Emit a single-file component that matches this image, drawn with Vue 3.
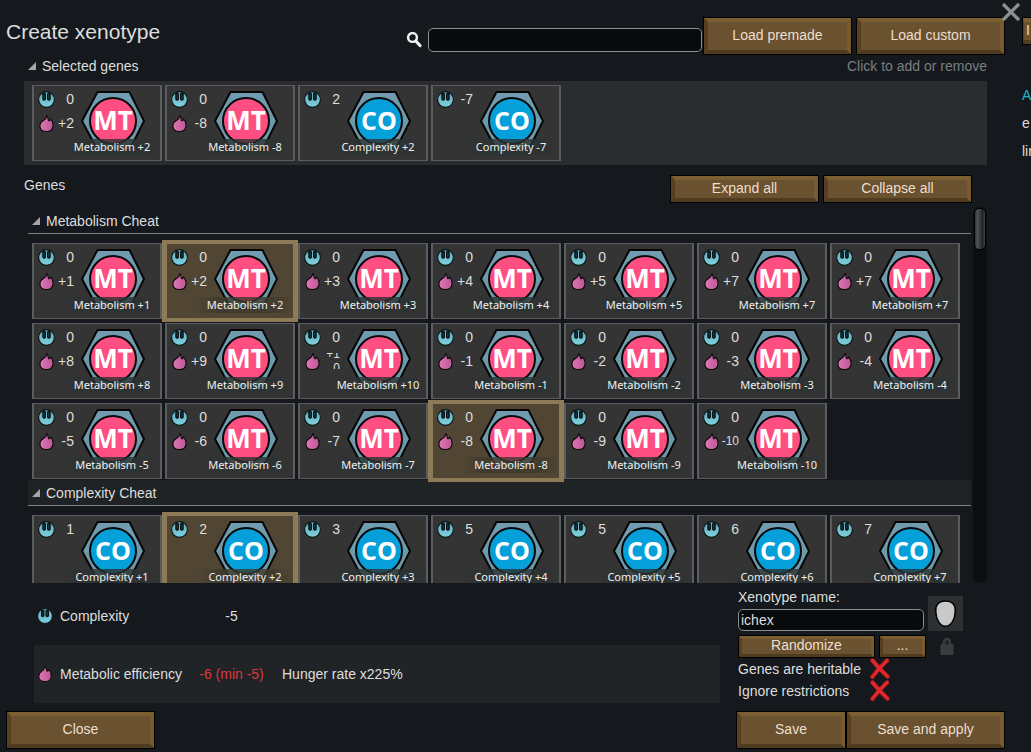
<template>
  <div class="window">
    <main class="dialog">
      <header class="top">
        <h1>Create xenotype</h1>
        <label class="search-icon" for="search" aria-label="Search genes">
          <svg width="16" height="16" viewBox="0 0 16 16">
            <circle cx="6.500" cy="5.500" r="4.4" fill="none" stroke="#f2f2f2" stroke-width="2.4" />
            <path d="M9.800 9L14 13.500" stroke="#f2f2f2" stroke-width="3.2" stroke-linecap="round" />
          </svg>
        </label>
        <input id="search" v-model="search" class="field search" type="text" />
        <div class="top-buttons">
          <button type="button" class="btn wide tall">Load premade</button>
          <button type="button" class="btn wide tall">Load custom</button>
        </div>
      </header>

      <section class="selected">
        <div class="selected-head">
          <i class="triangle"></i>
          <h2>Selected genes</h2>
          <span class="hint">Click to add or remove</span>
        </div>
        <div class="selected-panel">
          <div v-for="gene in selectedGenes" :key="gene.label" class="gene">
            <div class="costs">
              <div class="cost">
                <svg class="icon" viewBox="0 0 16 16"><use href="#icon-complexity" /></svg>
                <span>{{ gene.cpx }}</span>
              </div>
              <div v-if="gene.met" class="cost">
                <svg class="icon" viewBox="0 0 16 16"><use href="#icon-metabolism" /></svg>
                <span>{{ gene.met }}</span>
              </div>
            </div>
            <svg class="hex" viewBox="0 0 64 60">
              <use href="#hexagon" />
              <circle cx="32" cy="30" r="23" :fill="colors[gene.kind]" stroke="#080808" stroke-width="2" />
              <text x="32" y="39" text-anchor="middle" :class="gene.kind">{{ gene.kind }}</text>
            </svg>
            <span class="gene-label">{{ gene.label }}</span>
          </div>
        </div>
      </section>

      <div class="genes-head">
        <h2>Genes</h2>
        <button type="button" class="btn wide">Expand all</button>
        <button type="button" class="btn wide">Collapse all</button>
      </div>

      <div class="browser">
        <div class="list">
          <section v-for="group in groups" :key="group.title" class="group">
            <h3><i class="triangle"></i>{{ group.title }}</h3>
            <div class="grid">
              <button
                v-for="(gene, index) in group.genes"
                :key="index"
                type="button"
                class="gene"
                :class="{ active: gene.active }"
              >
                <span class="costs">
                  <span class="cost">
                    <svg class="icon" viewBox="0 0 16 16"><use href="#icon-complexity" /></svg>
                    <span>{{ gene.cpx }}</span>
                  </span>
                  <span v-if="gene.met" class="cost">
                    <svg class="icon" viewBox="0 0 16 16"><use href="#icon-metabolism" /></svg>
                    <span :class="{ small: gene.met === '-10', wrapped: gene.met === '+10' }"><b>{{ gene.met }}</b></span>
                  </span>
                </span>
                <svg class="hex" viewBox="0 0 64 60">
                  <use href="#hexagon" />
                  <circle cx="32" cy="30" r="23" :fill="colors[gene.kind]" stroke="#080808" stroke-width="2" />
                  <text x="32" y="39" text-anchor="middle" :class="gene.kind">{{ gene.kind }}</text>
                </svg>
                <span class="gene-label">{{ gene.label }}</span>
              </button>
            </div>
          </section>
        </div>
        <div class="scrollbar"><div class="thumb"></div></div>
      </div>

      <div class="bottom">
        <div class="stats">
          <div class="stat">
            <svg class="icon" viewBox="0 0 16 16"><use href="#icon-complexity" /></svg>
            <span>Complexity</span>
            <span class="value">-5</span>
          </div>
          <div class="stat shaded">
            <svg class="icon" viewBox="0 0 16 16"><use href="#icon-metabolism" /></svg>
            <span>Metabolic efficiency</span>
            <span class="value bad">-6 (min -5)</span>
            <span class="note">Hunger rate x225%</span>
          </div>
        </div>

        <form class="options" @submit.prevent>
          <div class="name-row">
            <div class="name">
              <label for="name">Xenotype name:</label>
              <input id="name" v-model="name" class="field" type="text" />
            </div>
            <button type="button" class="face" aria-label="Choose icon">
              <svg width="35" height="35" viewBox="0 0 35 35">
                <path d="M17.500 5C24 5 27.500 8.500 27.300 15C27.100 23 23.500 30.300 17.500 30.300C11.500 30.300 7.900 23 7.700 15C7.500 8.500 11 5 17.500 5Z" fill="#c9c9c9" stroke="#060606" stroke-width="1.6" />
              </svg>
            </button>
          </div>
          <div class="random-row">
            <button type="button" class="btn short randomize">Randomize</button>
            <button type="button" class="btn short more">...</button>
            <button type="button" class="lock" aria-label="Lock name">
              <svg width="14" height="20" viewBox="0 0 14 20">
                <path d="M0.500 18V8L3 6V4.500Q3.500 0.800 7 0.800Q10.500 0.800 11 4.500V6L13.500 8V18Z" fill="#393c3e" />
                <path d="M5.300 5.500Q5.300 3.600 7 3.600Q8.700 3.600 8.700 5.500L9 6.500L7 8L5 6.500Z" fill="#1d2022" />
              </svg>
            </button>
          </div>
          <label v-for="option in options" :key="option.text" class="check">
            <span>{{ option.text }}</span>
            <input v-model="option.on" type="checkbox" />
            <svg width="22" height="22" viewBox="0 0 22 22">
              <path d="M3.500 2.500Q10 10.500 18.500 18.500M18 2.500Q9.500 10.500 3.500 18.800" fill="none" stroke="#5d1416" stroke-width="5" stroke-linecap="round" />
              <path d="M3.500 2.500Q10 10.500 18.500 18.500M18 2.500Q9.500 10.500 3.500 18.800" fill="none" stroke="#e0272b" stroke-width="3.600" stroke-linecap="round" />
            </svg>
          </label>
        </form>
      </div>

      <footer>
        <button type="button" class="btn wide tall">Close</button>
        <div class="save-buttons">
          <button type="button" class="btn tall save">Save</button>
          <button type="button" class="btn tall apply">Save and apply</button>
        </div>
      </footer>
    </main>

    <aside class="side">
      <button type="button" class="btn">I</button>
      <a href="#">A</a>
      <p>e</p>
      <p>lin</p>
    </aside>

    <button type="button" class="close" aria-label="Close window">
      <svg width="20" height="20" viewBox="0 0 20 20">
        <path d="M2 2L18 18M18 2L2 18" stroke="#8d9093" stroke-width="3.200" />
      </svg>
    </button>

    <!-- shared icon shapes -->
    <svg class="defs" width="0" height="0" aria-hidden="true">
      <defs>
        <linearGradient id="teal" x1="0" y1="0" x2="0" y2="1">
          <stop offset="0" stop-color="#5fa9bb" />
          <stop offset="1" stop-color="#80d2e0" />
        </linearGradient>
        <linearGradient id="pink" x1="0" y1="0" x2="1" y2="0">
          <stop offset="0" stop-color="#e077b4" />
          <stop offset="1" stop-color="#bd5796" />
        </linearGradient>
        <linearGradient id="steel" x1="0" y1="0" x2="0" y2="1">
          <stop offset="0" stop-color="#719bb1" />
          <stop offset="1" stop-color="#6a97a5" />
        </linearGradient>
        <symbol id="icon-complexity" viewBox="0 0 16 16">
          <circle cx="8" cy="8" r="7.400" fill="url(#teal)" stroke="#0b1316" stroke-width="1" />
          <rect x="4" y="1.400" width="3.500" height="7.800" rx="1.700" fill="#071013" />
          <rect x="8.500" y="1.400" width="3.500" height="7.800" rx="1.700" fill="#071013" />
          <path d="M5.800 3V7.500M10.200 3V7.500" stroke="#2b4f59" stroke-width="0.800" />
        </symbol>
        <symbol id="icon-metabolism" viewBox="0 0 16 16">
          <path d="M8.400 0.400Q9.600 2.600 9.800 5.200Q11.300 5.800 12 3.800Q14.400 6.600 14.200 10.200Q13.600 15.600 8 15.600Q1.800 15.500 1.800 10Q2.200 6.600 5.400 5Q8 3.400 8.400 0.400Z" fill="url(#pink)" stroke="#0c0a0c" stroke-width="1" />
        </symbol>
        <symbol id="hexagon" viewBox="0 0 64 60">
          <path d="M16.500 1H48.500L63 30L48.500 59H16.500L1 30Z" fill="url(#steel)" stroke="#060606" stroke-width="2" />
        </symbol>
      </defs>
    </svg>
  </div>
</template>

<script setup>
import { ref } from 'vue';

const search = ref('');
const name = ref('ichex');

const colors = {
  MT: '#ff4f82',
  CO: '#059fd9'
};

const options = ref([
  { text: 'Genes are heritable', on: false },
  { text: 'Ignore restrictions', on: false }
]);

const selectedGenes = [
  { kind: 'MT', cpx: '0', met: '+2', label: 'Metabolism +2' },
  { kind: 'MT', cpx: '0', met: '-8', label: 'Metabolism -8' },
  { kind: 'CO', cpx: '2', label: 'Complexity +2' },
  { kind: 'CO', cpx: '-7', label: 'Complexity -7' }
];

const metabolism = [
  '+1', '+2', '+3', '+4', '+5', '+7', '+7', '+8', '+9', '+10',
  '-1', '-2', '-3', '-4', '-5', '-6', '-7', '-8', '-9', '-10'
];
const complexity = ['1', '2', '3', '5', '5', '6', '7'];

const groups = [
  {
    title: 'Metabolism Cheat',
    genes: metabolism.map((met) => ({
      kind: 'MT',
      cpx: '0',
      met,
      label: `Metabolism ${met}`,
      active: met === '+2' || met === '-8'
    }))
  },
  {
    title: 'Complexity Cheat',
    genes: complexity.map((cpx, index) => ({
      kind: 'CO',
      cpx,
      label: `Complexity +${index + 1}`,
      active: index === 1
    }))
  }
];
</script>

<style>
body {
  background-color: #15191d;
  overflow: hidden;
}
</style>

<style scoped>
.window {
  position: relative;
  display: flex;
  gap: 17px;
  height: 100vh;
  color: #dedede;
  background-color: #15191d;
  font-family: "Liberation Sans", Arial, sans-serif;
  font-size: 14px;
}

.dialog {
  flex: 1;
  min-width: 0;
  display: flex;
  flex-direction: column;
}

h1, h2, h3, p {
  margin: 0;
  font-weight: normal;
}

h2, h3 {
  font-size: 14px;
}

button, input {
  font: inherit;
  color: inherit;
  box-sizing: border-box;
}

button {
  padding: 0;
  border: 0;
  background: none;
}

svg {
  display: block;
}

.defs {
  position: absolute;
}

/* wooden buttons */
.btn {
  height: 26px;
  margin: 1px;
  padding-bottom: 2px;
  border: 4px solid;
  border-color: #7b5f30 #785c30 #4f3b1d #573f20;
  background-color: #6a512f;
  color: #ecdfce;
  line-height: 16px;
  box-shadow: 0 0 0 1px #000;
}

.btn.wide {
  width: 147px;
}

.btn.tall {
  height: 36px;
}

.btn.short {
  height: 21px;
  border-width: 3px;
  line-height: 13px;
}

.field {
  border: 1px solid #8b8f91;
  border-radius: 5px;
  background-color: #080a0b;
  padding: 0 2px;
  outline: 0;
}

.triangle {
  width: 8px;
  height: 8px;
  background-color: #a4a6a7;
  clip-path: polygon(100% 0, 100% 100%, 0 100%);
}

/* header */
.top {
  display: flex;
  align-items: flex-end;
  padding: 17px 0 0 6px;
}

h1 {
  flex: 1;
  align-self: flex-start;
  font-size: 21px;
  line-height: 30px;
}

.search-icon {
  margin: 0 6px 7px 0;
}

.search {
  width: 274px;
  height: 24px;
  margin: 0 1px 3px 0;
}

.top-buttons {
  display: flex;
  gap: 4px;
}

/* selected genes */
.selected {
  padding: 0 18px 0 24px;
}

.selected-head {
  display: flex;
  align-items: center;
  gap: 6px;
  padding: 0 0 4px 4px;
  line-height: 22px;
}

.hint {
  margin-left: auto;
  color: #7b7e80;
}

.selected-panel {
  display: flex;
  gap: 3px;
  padding: 4px 8px;
  background-color: #2a2c2d;
}

/* gene card */
.gene {
  position: relative;
  display: flex;
  align-items: flex-start;
  width: 130px;
  height: 76px;
  box-sizing: border-box;
  border: solid #5b5c5d;
  border-width: 1px 2px;
  background-color: #343434;
  text-align: left;
}

.gene.active {
  border-color: #8d7b57;
  background-color: #514533;
  box-shadow: 0 0 0 3px #8d7b57;
}

.costs {
  width: 40px;
  padding-top: 1px;
}

.cost {
  display: flex;
  align-items: center;
  justify-content: space-between;
  height: 24px;
  padding-left: 4px;
}

.icon {
  flex: none;
  width: 17px;
  height: 17px;
}

.cost b {
  font-weight: normal;
}

.small {
  font-size: 12px;
}

.wrapped {
  display: flex;
  align-items: center;
  width: 14px;
  height: 16px;
  overflow: hidden;
  font-size: 12px;
  line-height: 14px;
  text-align: right;
  word-break: break-all;
}

.hex {
  width: 64px;
  height: 60px;
  margin: 5px 0 0 7px;
}

.hex text {
  font-family: "Open Sans", sans-serif;
  font-size: 25px;
  font-weight: bold;
  fill: #fff;
}

.hex .MT {
  font-size: 26px;
}

.gene-label {
  position: absolute;
  left: 30px;
  right: 0;
  bottom: 5px;
  height: 16px;
  font-family: "Noto Sans", sans-serif;
  font-size: 11px;
  line-height: 16px;
  text-align: center;
  white-space: nowrap;
  color: #f0f0f0;
  background: linear-gradient(90deg, transparent, rgba(44, 50, 50, 0.8) 20%, rgba(44, 50, 50, 0.8) 80%, transparent);
}

.active .gene-label {
  background: linear-gradient(90deg, transparent, rgba(62, 58, 46, 0.8) 20%, rgba(62, 58, 46, 0.8) 80%, transparent);
}

/* gene browser */
.genes-head {
  display: flex;
  align-items: center;
  gap: 4px;
  padding: 10px 33px 4px 24px;
}

.genes-head h2 {
  flex: 1;
  line-height: 20px;
  padding-bottom: 8px;
}

.browser {
  flex: 1;
  min-height: 0;
  display: flex;
  gap: 2px;
  padding: 0 18px 0 28px;
}

.list {
  flex: 1;
  overflow: hidden;
  padding-top: 1px;
}

h3 {
  display: flex;
  align-items: center;
  gap: 6px;
  padding: 1px 0 0 4px;
  line-height: 24px;
  border-bottom: 1px solid #7f8385;
}

.group:nth-child(even) h3 {
  background-color: #202325;
}

.grid {
  display: grid;
  grid-template-columns: repeat(auto-fill, 130px);
  gap: 4px 3px;
  padding: 9px 4px 1px;
}

.scrollbar {
  width: 14px;
  box-sizing: border-box;
  padding: 1px;
  border-radius: 7px;
  background-color: #0b0e10;
}

.thumb {
  height: 42px;
  box-sizing: border-box;
  border: 1px solid #000;
  border-radius: 5px;
  background: linear-gradient(90deg, #303233, #505253 25%, #222425 75%, #404243);
}

/* totals and options */
.bottom {
  display: flex;
  gap: 18px;
  padding: 4px 0 8px 34px;
}

.stats {
  flex: 1;
}

.stat {
  display: grid;
  grid-template-columns: 20px 132px 82px 1fr;
  align-items: center;
  height: 58px;
  box-sizing: border-box;
  padding: 0 0 1px 3px;
}

.stat .icon {
  width: 16px;
  height: 16px;
}

.stat > span {
  margin-left: 3px;
}

.stat .value {
  text-align: center;
}

.stat .note {
  margin-left: 11px;
}

.shaded {
  background-color: #212426;
}

.bad {
  color: #dc373b;
}

.options {
  width: 267px;
}

.name-row {
  display: flex;
  align-items: flex-end;
  gap: 4px;
}

.name {
  display: flex;
  flex-direction: column;
  gap: 2px;
  width: 186px;
}

.name label {
  line-height: 20px;
}

.name .field {
  height: 22px;
}

.face {
  background-color: #2d3032;
}

.random-row {
  display: flex;
  align-items: center;
  gap: 4px;
  padding-top: 4px;
}

.randomize {
  width: 135px;
}

.more {
  width: 45px;
}

.lock {
  margin-left: 10px;
}

.check {
  position: relative;
  display: flex;
  align-items: center;
  height: 22px;
}

.check span {
  width: 131px;
}

.check input {
  position: absolute;
  left: 131px;
  width: 22px;
  height: 22px;
  margin: 0;
  opacity: 0;
}

footer {
  display: flex;
  justify-content: space-between;
  padding: 0 0 3px 6px;
}

.save-buttons {
  display: flex;
}

.save {
  width: 108px;
}

.apply {
  width: 157px;
}

/* neighbouring panel, cut by the window edge */
.side {
  width: 9px;
  padding-top: 17px;
  overflow: hidden;
  white-space: nowrap;
}

.side .btn {
  display: block;
  width: 147px;
  border-left-width: 1px;
  padding-left: 2px;
  text-align: left;
  margin-bottom: 38px;
}

.side a {
  display: block;
  color: #19b7cf;
  line-height: 27px;
  text-decoration: none;
}

.side p {
  line-height: 28px;
}

.close {
  position: absolute;
  top: 2px;
  right: 10px;
}
</style>
